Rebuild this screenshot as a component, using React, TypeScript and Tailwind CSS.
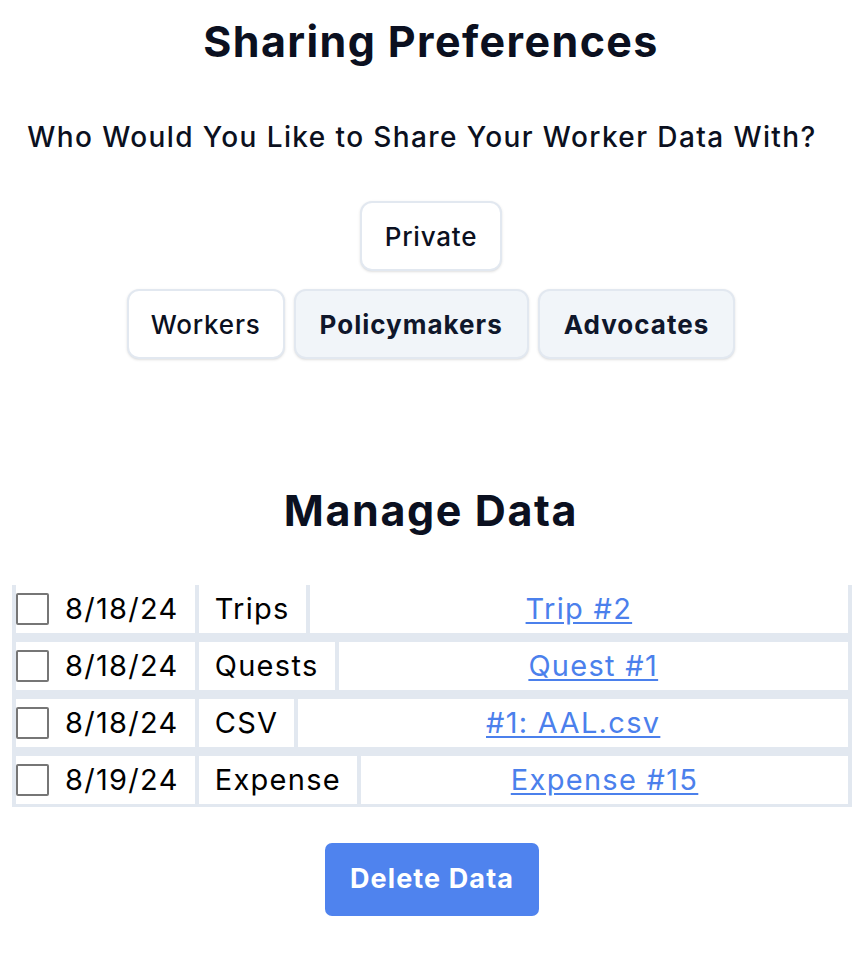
import React from 'react';

const rows = [
  { date: '8/18/24', type: 'Trips', link: 'Trip #2' },
  { date: '8/18/24', type: 'Quests', link: 'Quest #1' },
  { date: '8/18/24', type: 'CSV', link: '#1: AAL.csv' },
  { date: '8/19/24', type: 'Expense', link: 'Expense #15' },
];

const App: React.FC = () => {
  return (
    <div className="min-h-screen bg-white text-[#0b1020] font-['Inter',sans-serif]">
      <div className="flex flex-col items-center pt-[16px]">
        <h1 className="text-[43px] leading-[50px] font-bold tracking-[1.4px]">Sharing Preferences</h1>
        <p className="mt-[55px] text-[28px] leading-[32px] font-medium tracking-[1.4px] pr-[18px]">
          Who Would You Like to Share Your Worker Data With?
        </p>

        <div className="mt-[48px] flex flex-col items-center gap-[18px] tracking-[0.8px]">
          <button className="h-[70px] px-[23px] rounded-[12px] border-2 border-slate-200 bg-white shadow-sm text-[26px] font-medium">
            Private
          </button>
          <div className="flex gap-[9px]">
            <button className="h-[70px] px-[22px] rounded-[12px] border-2 border-slate-200 bg-white shadow-sm text-[26px] font-medium">
              Workers
            </button>
            <button className="h-[70px] px-[24px] rounded-[12px] border-2 border-slate-200 bg-slate-100 shadow-sm text-[26px] font-bold tracking-[1px] text-slate-900">
              Policymakers
            </button>
            <button className="h-[70px] px-[24px] rounded-[12px] border-2 border-slate-200 bg-slate-100 shadow-sm text-[26px] font-bold tracking-[1px] text-slate-900">
              Advocates
            </button>
          </div>
        </div>

        <h2 className="mt-[126px] text-[43px] leading-[50px] font-bold tracking-[1.6px]">Manage Data</h2>
      </div>

      <div className="mt-[50px] ml-[12px] mr-[10px] flex flex-col gap-[9.5px] bg-slate-200 px-[4px] pb-[3px] text-[29px] tracking-[1.3px] text-black">
        {rows.map((r, i) => (
          <div key={i} className="flex h-[47.5px] gap-[4px]">
            <div className="flex items-center bg-white">
              <span className="w-[33px] h-[32px] border-2 border-[#767676] rounded-[2px] bg-white" />
              <span className="px-[16px]">{r.date}</span>
            </div>
            <div className="flex items-center bg-white px-[16px]">{r.type}</div>
            <div className="flex flex-1 items-center justify-center bg-white">
              <a href="#" className="text-[#4b80ec] underline underline-offset-[3px]">
                {r.link}
              </a>
            </div>
          </div>
        ))}
      </div>

      <div className="flex justify-center mt-[36px] pl-[2px]">
        <button className="w-[214px] h-[73px] rounded-[7px] bg-[#4f83ee] text-white text-[27px] font-bold tracking-[1.1px]">
          Delete Data
        </button>
      </div>
    </div>
  );
};

export default App;
